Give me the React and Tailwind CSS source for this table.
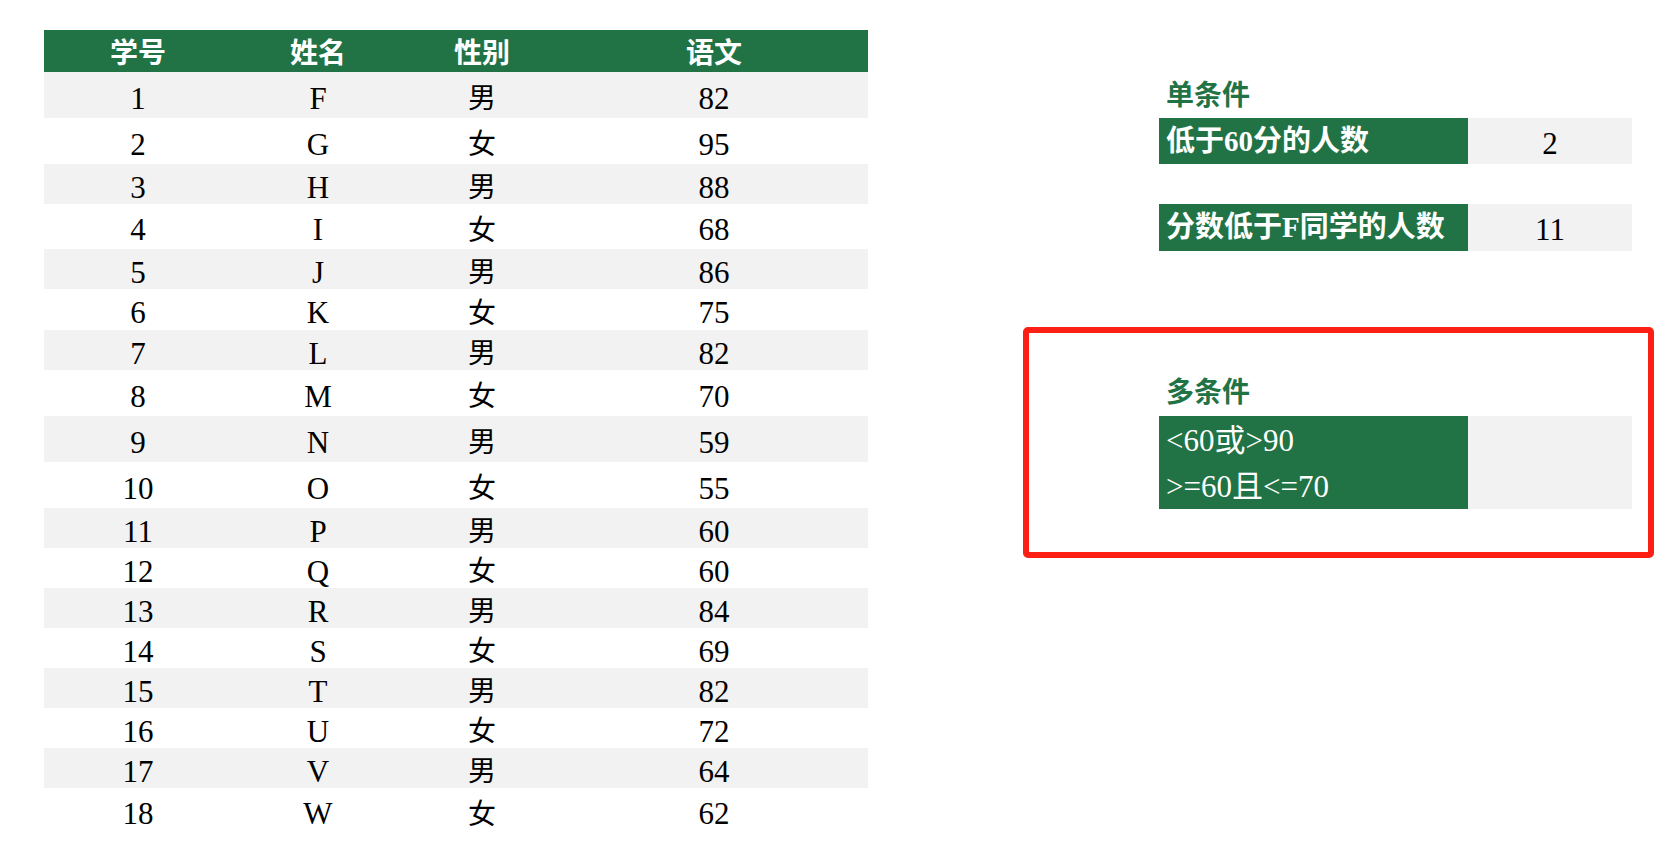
const rows = [
  { id: 1, name: 'F', sex: '男', score: 82, h: 'h-[46px]' },
  { id: 2, name: 'G', sex: '女', score: 95, h: 'h-[46px]' },
  { id: 3, name: 'H', sex: '男', score: 88, h: 'h-[40px]' },
  { id: 4, name: 'I', sex: '女', score: 68, h: 'h-[45px]' },
  { id: 5, name: 'J', sex: '男', score: 86, h: 'h-[40px]' },
  { id: 6, name: 'K', sex: '女', score: 75, h: 'h-[41px]' },
  { id: 7, name: 'L', sex: '男', score: 82, h: 'h-[40px]' },
  { id: 8, name: 'M', sex: '女', score: 70, h: 'h-[46px]' },
  { id: 9, name: 'N', sex: '男', score: 59, h: 'h-[46px]' },
  { id: 10, name: 'O', sex: '女', score: 55, h: 'h-[46px]' },
  { id: 11, name: 'P', sex: '男', score: 60, h: 'h-[40px]' },
  { id: 12, name: 'Q', sex: '女', score: 60, h: 'h-[40px]' },
  { id: 13, name: 'R', sex: '男', score: 84, h: 'h-[40px]' },
  { id: 14, name: 'S', sex: '女', score: 69, h: 'h-[40px]' },
  { id: 15, name: 'T', sex: '男', score: 82, h: 'h-[40px]' },
  { id: 16, name: 'U', sex: '女', score: 72, h: 'h-[40px]' },
  { id: 17, name: 'V', sex: '男', score: 64, h: 'h-[40px]' },
  { id: 18, name: 'W', sex: '女', score: 62, h: 'h-[45px]' },
];

const cols = 'grid grid-cols-[188px_172px_156px_308px]';
const serif = "font-['Liberation_Serif','Noto_Sans_CJK_SC',serif]";
const cell = 'flex items-center justify-center pt-[6px] leading-none';

function ScoreTable() {
  return (
    <div className="ml-[44px] mt-[30px] w-[824px]">
      <div className={`${cols} h-[42px] bg-[#217346] text-white text-[28px] font-bold font-['Noto_Sans_CJK_SC',sans-serif]`}>
        <div className="flex items-center justify-center leading-none">学号</div>
        <div className="flex items-center justify-center leading-none">姓名</div>
        <div className="flex items-center justify-center leading-none">性别</div>
        <div className="flex items-center justify-center leading-none">语文</div>
      </div>
      {rows.map((r, i) => (
        <div
          key={r.id}
          className={`${cols} ${r.h} ${i % 2 === 0 ? 'bg-[#f2f2f2]' : 'bg-white'} text-black text-[31px] ${serif}`}
        >
          <div className={cell}>{r.id}</div>
          <div className={cell}>{r.name}</div>
          <div className="flex items-center justify-center pt-[2px] leading-none text-[28px] font-['Noto_Sans_CJK_SC',sans-serif]">
            {r.sex}
          </div>
          <div className={cell}>{r.score}</div>
        </div>
      ))}
    </div>
  );
}

function StatRow({ label, value, className = '' }) {
  return (
    <div className={`flex h-[46px] ${className}`}>
      <div className="w-[309px] bg-[#217346] text-white text-[29px] font-bold flex items-center pl-[7px] leading-none whitespace-nowrap">
        {label}
      </div>
      <div className="w-[164px] bg-[#f2f2f2] text-black text-[31px] flex items-center justify-center pt-[4px] leading-none">
        {value}
      </div>
    </div>
  );
}

export default function App() {
  return (
    <div className={`w-[1679px] h-[857px] bg-white flex items-start overflow-hidden ${serif}`}>
      <ScoreTable />

      <div className="ml-[155px] w-[631px] flex flex-col">
        <div className="pl-[136px]">
          <div className="mt-[76px] h-[40px] pl-[7px] flex items-center text-[28px] font-bold text-[#217346] leading-none">
            单条件
          </div>
          <StatRow label="低于60分的人数" value="2" className="mt-[2px]" />
          <StatRow label="分数低于F同学的人数" value="11" className="mt-[40px] h-[47px]" />
        </div>

        <div className="mt-[76px] h-[231px] border-[6px] border-[#fe1f14] rounded-[5px] pl-[130px] pt-[40px]">
          <div className="h-[40px] pl-[7px] flex items-center text-[28px] font-bold text-[#217346] leading-none">
            多条件
          </div>
          <div className="mt-[3px] flex h-[93px]">
            <div className="w-[309px] bg-[#217346] text-white text-[31px] flex flex-col pl-[7px] leading-none whitespace-nowrap">
              <div className="h-[46px] flex items-center pt-[2px]">&lt;60或&gt;90</div>
              <div className="h-[47px] flex items-center pt-[2px]">&gt;=60且&lt;=70</div>
            </div>
            <div className="w-[164px] bg-[#f2f2f2]"></div>
          </div>
        </div>
      </div>
    </div>
  );
}
